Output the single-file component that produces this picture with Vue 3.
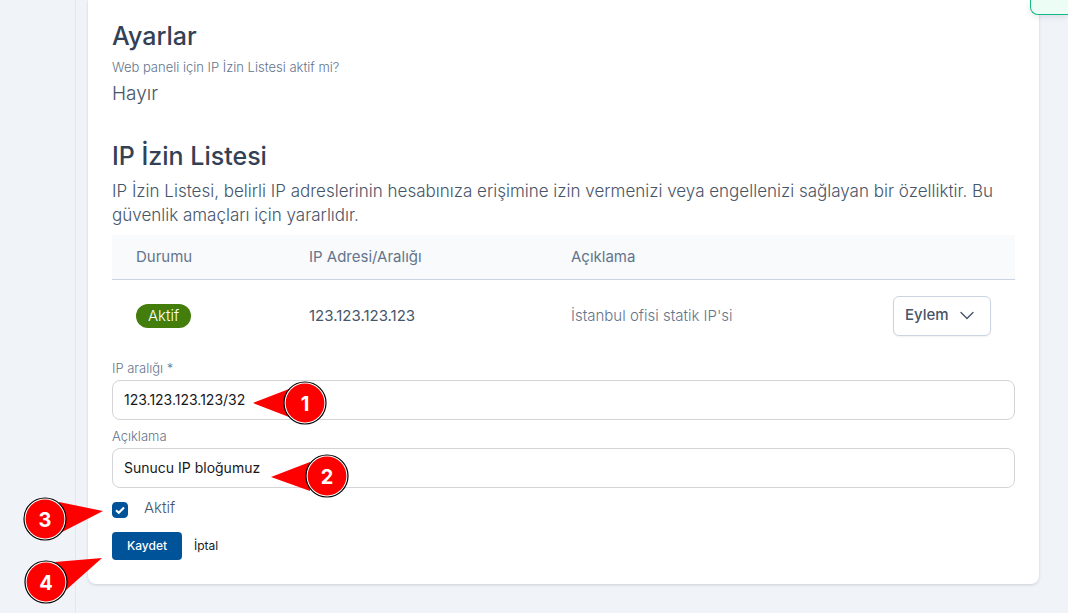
<template>
  <div class="page">
    <aside class="sidebar"></aside>

    <main class="main">
      <section class="card">
        <h2 class="title">Ayarlar</h2>
        <p class="hint">Web paneli için IP İzin Listesi aktif mi?</p>
        <p class="value">Hayır</p>

        <h2 class="title list-title">IP İzin Listesi</h2>
        <p class="description">
          IP İzin Listesi, belirli IP adreslerinin hesabınıza erişimine izin vermenizi veya engellenizi sağlayan bir özelliktir. Bu
          güvenlik amaçları için yararlıdır.
        </p>

        <table class="table">
          <thead>
            <tr>
              <th class="col-status">Durumu</th>
              <th class="col-ip">IP Adresi/Aralığı</th>
              <th>Açıklama</th>
              <th class="col-action"></th>
            </tr>
          </thead>
          <tbody>
            <tr v-for="item in items" :key="item.ip">
              <td><span class="badge">{{ item.status }}</span></td>
              <td class="ip">{{ item.ip }}</td>
              <td>{{ item.note }}</td>
              <td>
                <button type="button" class="action">
                  Eylem
                  <svg width="16" height="16" viewBox="0 0 16 16" fill="none">
                    <path d="M2 5.5l6 6 6-6" stroke="currentColor" stroke-width="1.4" stroke-linecap="round" stroke-linejoin="round" />
                  </svg>
                </button>
              </td>
            </tr>
          </tbody>
        </table>

        <form class="form" @submit.prevent="save">
          <div class="field">
            <label for="range">IP aralığı *</label>
            <input id="range" v-model="range" type="text" required />
          </div>

          <div class="field">
            <label for="note">Açıklama</label>
            <input id="note" v-model="note" type="text" />
          </div>

          <div class="check">
            <input id="active" v-model="active" type="checkbox" />
            <label for="active">Aktif</label>
          </div>

          <div class="buttons">
            <button type="submit" class="save">Kaydet</button>
            <button type="button" class="cancel" @click="reset">İptal</button>
          </div>
        </form>
      </section>
    </main>

    <div class="toast"></div>

    <!-- numbered step markers -->
    <svg class="markers" width="360" height="613" viewBox="0 0 360 613">
      <g v-for="m in markers" :key="m.label">
        <polygon :points="m.pointer" fill="#ff0000" />
        <circle :cx="m.x" :cy="m.y" r="21" fill="#ffffff" stroke="#000000" stroke-width="1.2" />
        <circle :cx="m.x" :cy="m.y" r="19.4" fill="#ff0000" />
        <text :x="m.x" :y="m.y + 8" text-anchor="middle">{{ m.label }}</text>
      </g>
    </svg>
  </div>
</template>

<script setup>
import { ref } from 'vue'

const items = ref([
  { status: 'Aktif', ip: '123.123.123.123', note: "İstanbul ofisi statik IP'si" }
])

const range = ref('123.123.123.123/32')
const note = ref('Sunucu IP bloğumuz')
const active = ref(true)

const markers = [
  { label: 1, x: 305, y: 403, pointer: '253,403 289,389 289,417' },
  { label: 2, x: 327, y: 476, pointer: '271,477 310,462 310,491' },
  { label: 3, x: 45, y: 519, pointer: '103,511 59,502 62,532' },
  { label: 4, x: 46, y: 582, pointer: '102,558 55,562 66,590' }
]

function reset() {
  range.value = ''
  note.value = ''
  active.value = false
}

function save() {
  items.value.push({
    status: active.value ? 'Aktif' : 'Pasif',
    ip: range.value,
    note: note.value
  })
  reset()
}
</script>

<style>
body {
  background: #f0f4f9;
}
</style>

<style scoped>
.page {
  position: relative;
  display: flex;
  min-height: 100vh;
  font-family: Inter, "Noto Sans", sans-serif;
  font-weight: 300;
  color: #475569;
  overflow: hidden;
}

.page * {
  box-sizing: border-box;
}

.sidebar {
  flex: 0 0 76px;
  border-right: 1px solid #e2e8f0;
}

.main {
  flex: 1;
  padding: 0 29px 29px 12px;
}

.card {
  padding: 20px 24px 24px;
  background: #fff;
  border-radius: 0 0 8px 8px;
  box-shadow: 0 1px 3px rgba(15, 23, 42, 0.16);
}

.title {
  margin: 0;
  font-size: 25px;
  line-height: 32px;
  font-weight: 500;
  color: #334155;
}

.list-title {
  margin-top: 32px;
}

.hint {
  margin: 7px 0 5px;
  font-size: 13px;
  line-height: 16px;
  color: #64748b;
}

.value {
  margin: 0;
  font-size: 19px;
  line-height: 28px;
}

.description {
  margin: 7px 0 8px;
  font-size: 17px;
  line-height: 24px;
}

.table {
  width: 100%;
  border-collapse: collapse;
  table-layout: fixed;
  font-size: 15px;
  line-height: 20px;
  color: #64748b;
}

.table th {
  height: 44px;
  padding: 0 24px;
  background: #f8fafc;
  border-bottom: 1px solid #cbd5e1;
  font-weight: 400;
  text-align: left;
}

.table td {
  height: 73px;
  padding: 0 24px;
}

.col-status {
  width: 173px;
}

.col-ip {
  width: 262px;
}

.col-action {
  width: 146px;
}

.table .ip {
  color: #475569;
  font-weight: 400;
}

.badge {
  display: inline-block;
  padding: 2px 12px;
  border-radius: 12px;
  background: #437d0b;
  color: #fff;
}

.action {
  display: flex;
  align-items: center;
  justify-content: space-between;
  width: 98px;
  height: 40px;
  padding: 0 15px 2px 11px;
  background: #fff;
  border: 1px solid #cbd5e1;
  border-radius: 6px;
  box-shadow: 0 1px 2px rgba(15, 23, 42, 0.06);
  font: 500 15px/20px Inter, "Noto Sans", sans-serif;
  color: #475569;
  cursor: pointer;
}

.form {
  display: flex;
  flex-direction: column;
  gap: 8px;
  padding-top: 8px;
}

.field {
  display: flex;
  flex-direction: column;
  gap: 4px;
}

.field label {
  font-size: 13px;
  line-height: 16px;
  color: #64748b;
}

.field input {
  width: 100%;
  height: 40px;
  padding: 0 11px 2px;
  background: #fff;
  border: 1px solid #d4d4d8;
  border-radius: 8px;
  outline: none;
  font: 400 14px/20px Inter, "Noto Sans", sans-serif;
  color: #18181b;
}

.field input:focus {
  border-color: #005299;
}

.check {
  display: flex;
  align-items: center;
  gap: 16px;
  padding: 2px 0 6px;
  font-size: 15px;
  line-height: 20px;
}

.check input {
  appearance: none;
  width: 16px;
  height: 16px;
  margin: 4px 0 0;
  border: 1px solid #94a3b8;
  border-radius: 4px;
  background: #fff;
}

.check input:checked {
  border-color: #005299;
  background: #005299 url("data:image/svg+xml,%3Csvg xmlns='http://www.w3.org/2000/svg' viewBox='0 0 16 16'%3E%3Cpath d='M4 8.2l2.8 2.6 5.2-5.3' fill='none' stroke='white' stroke-width='2.1'/%3E%3C/svg%3E") center / 16px no-repeat;
}

.buttons {
  display: flex;
  align-items: center;
  gap: 12px;
}

.buttons button {
  height: 28px;
  border: none;
  font: 400 12px/16px Inter, "Noto Sans", sans-serif;
  cursor: pointer;
}

.buttons .save {
  width: 70px;
  padding: 0;
  border-radius: 4px;
  background: #005299;
  font-weight: 500;
  color: #fff;
}

.buttons .cancel {
  padding: 0;
  background: none;
  color: #18181b;
}

.toast {
  position: absolute;
  top: 0;
  right: 0;
  width: 38px;
  height: 15px;
  border: 1px solid #10b981;
  border-width: 0 0 1px 1px;
  border-bottom-left-radius: 8px;
  background: #ecfdf5;
  box-shadow: 0 2px 6px rgba(15, 23, 42, 0.1);
}

.markers {
  position: absolute;
  top: 0;
  left: 0;
  pointer-events: none;
}

.markers text {
  font-size: 20px;
  font-weight: 700;
  fill: #fff;
}
</style>
